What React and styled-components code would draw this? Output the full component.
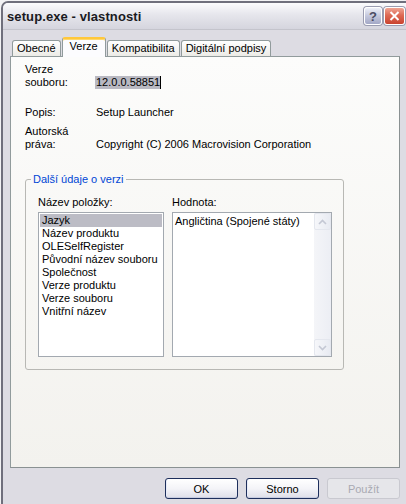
import React from 'react';
import styled, { createGlobalStyle, css } from 'styled-components';

const Global = createGlobalStyle`
  html, body { margin: 0; padding: 0; background: #f2f2f4; }
  body {
    font-family: "Liberation Sans", Arial, sans-serif;
    font-size: 11px;
    color: #000;
    overflow: hidden;
  }
  * { box-sizing: border-box; }
`;

const Window = styled.div`
  margin: 1px 0 0 1px;
  height: 503px;
  border-top: 2px solid #6f6f7c;
  border-left: 2px solid #6f6f7c;
  border-top-left-radius: 7px;
  background: #dddce3;
  display: flex;
  flex-direction: column;
  overflow: hidden;
`;

const TitleBar = styled.div`
  height: 27px;
  flex: none;
  display: flex;
  align-items: center;
  padding: 0 1px 0 4px;
  background: linear-gradient(#fbfbfd 0%, #e6e6ec 45%, #d5d5de 100%);
  border-bottom: 1px solid #c4c4cc;
`;

const Title = styled.div`
  font-family: "Liberation Sans", Arial, sans-serif;
  font-weight: bold;
  font-size: 13px;
  color: #1a1a22;
  letter-spacing: 0.1px;
`;

const TitleButtons = styled.div`
  margin-left: auto;
  display: flex;
  gap: 2px;
  align-self: flex-start;
  margin-top: 4px;
`;

const CaptionButton = styled.div`
  height: 18px;
  border: 1px solid #fff;
  border-radius: 3px;
  display: flex;
  align-items: center;
  justify-content: center;
  box-shadow: 0 0 0 1px #9a9cb0;
  ${(p) =>
    p.$kind === 'close'
      ? css`
          width: 21px;
          background: linear-gradient(#f0a594 0%, #de6a55 45%, #c9432f 100%);
        `
      : css`
          width: 18px;
          background: linear-gradient(#eef0f8 0%, #c3c7dc 50%, #a3a8c6 100%);
          color: #4a4c62;
          font-weight: bold;
          font-size: 13px;
        `}
`;

const Body = styled.div`
  flex: 1;
  padding: 7px 6px 0 7px;
  display: flex;
  flex-direction: column;
`;

const TabStrip = styled.div`
  height: 19px;
  display: flex;
  align-items: flex-end;
  padding-left: 2px;
`;

const Tab = styled.div`
  height: 16px;
  padding: 0 4px;
  margin-right: 1px;
  border: 1px solid #919b9c;
  border-bottom: none;
  border-radius: 3px 3px 0 0;
  background: linear-gradient(#ffffff, #ecebe6);
  display: flex;
  align-items: center;
  line-height: 13px;
  white-space: nowrap;
  ${(p) =>
    p.$active &&
    css`
      height: 20px;
      margin-bottom: -1px;
      padding: 0 7px 3px;
      border-top: 2px solid #ffc83c;
      box-shadow: inset 0 1px 0 #ffd86c;
      background: #fcfcfe;
      position: relative;
      z-index: 2;
    `}
`;

const Panel = styled.div`
  height: 412px;
  flex: none;
  position: relative;
  z-index: 1;
  border: 1px solid #919b9c;
  border-right-color: #8a9192;
  border-bottom-color: #8a9192;
  background: linear-gradient(#fcfcfb, #f3f2ee);
  padding: 6px 0 0 14px;
`;

const InfoRow = styled.div`
  display: grid;
  grid-template-columns: 71px auto;
  align-items: end;
  line-height: 13px;
  margin-top: ${(p) => p.$gap || 0}px;
`;

const Selected = styled.span`
  display: inline-block;
  background: #b9b9c2;
  padding: 0 0 0 1px;
  margin-left: -1px;
  border-right: 1px solid #000;
`;

const Group = styled.fieldset`
  margin: 22px 0 0 0;
  width: 319px;
  min-width: 0;
  padding: 10px 11px 12px 12px;
  border: 1px solid #b8b8b4;
  border-radius: 3px;
`;

const Legend = styled.legend`
  color: #0046d5;
  line-height: 13px;
  padding: 0 2px;
  margin-left: -7px;
`;

const Columns = styled.div`
  display: grid;
  grid-template-columns: 126px 160px;
  column-gap: 8px;
`;

const ColLabel = styled.div`
  line-height: 13px;
  margin-bottom: 3px;
`;

const ListBox = styled.div`
  height: 145px;
  border: 1px solid #a3a9b0;
  background: #fff;
  padding: 1px;
`;

const Item = styled.div`
  line-height: 13px;
  padding-left: 2px;
  background: ${(p) => (p.$selected ? '#bcbcc5' : 'transparent')};
`;

const ValueBox = styled.div`
  height: 145px;
  border: 1px solid #a3a9b0;
  background: #fff;
  display: flex;
`;

const ValueText = styled.div`
  flex: 1;
  padding: 2px 2px;
  line-height: 13px;
`;

const ScrollBar = styled.div`
  width: 17px;
  display: flex;
  flex-direction: column;
  justify-content: space-between;
  background: linear-gradient(to right, #f4f5f8, #eceef4);
`;

const ScrollButton = styled.div`
  width: 17px;
  height: 17px;
  border: 1px solid #e4e7ee;
  border-radius: 2px;
  background: linear-gradient(to right, #f6f7fa, #e8ebf2);
  display: flex;
  align-items: center;
  justify-content: center;
`;

const ButtonRow = styled.div`
  display: flex;
  justify-content: flex-end;
  gap: 8px;
  margin-top: 10px;
`;

const Button = styled.div`
  width: 73px;
  height: 21px;
  border-radius: 3px;
  display: flex;
  align-items: center;
  justify-content: center;
  ${(p) =>
    p.$disabled
      ? css`
          border: 1px solid #c9c9d0;
          background: #e6e6ea;
          color: #a9a9b2;
        `
      : css`
          border: 1px solid #1e2f5c;
          background: linear-gradient(#ffffff 0%, #f4f4f8 50%, #dedee8 100%);
          box-shadow: inset 0 -1px 0 #c8cde0, inset 1px 0 0 #e8ecf8;
          color: #000;
        `}
`;

const Chevron = ({ up }) => (
  <svg width="9" height="6" viewBox="0 0 9 6">
    <path
      d={up ? 'M1 5 L4.5 1.5 L8 5' : 'M1 1 L4.5 4.5 L8 1'}
      fill="none"
      stroke="#c4c8d4"
      strokeWidth="1.6"
    />
  </svg>
);

const items = [
  'Jazyk',
  'Název produktu',
  'OLESelfRegister',
  'Původní název souboru',
  'Společnost',
  'Verze produktu',
  'Verze souboru',
  'Vnitřní název',
];

const tabs = ['Obecné', 'Verze', 'Kompatibilita', 'Digitální podpisy'];

export default function App() {
  return (
    <>
      <Global />
      <Window>
        <TitleBar>
          <Title>setup.exe - vlastnosti</Title>
          <TitleButtons>
            <CaptionButton $kind="help">?</CaptionButton>
            <CaptionButton $kind="close">
              <svg width="11" height="10" viewBox="0 0 11 10">
                <path d="M1.5 1 L9.5 9 M9.5 1 L1.5 9" stroke="#fff" strokeWidth="2" />
              </svg>
            </CaptionButton>
          </TitleButtons>
        </TitleBar>
        <Body>
          <TabStrip>
            {tabs.map((t) => (
              <Tab key={t} $active={t === 'Verze'}>
                {t}
              </Tab>
            ))}
          </TabStrip>
          <Panel>
            <InfoRow>
              <div>
                Verze
                <br />
                souboru:
              </div>
              <div>
                <Selected>12.0.0.58851</Selected>
              </div>
            </InfoRow>
            <InfoRow $gap={17}>
              <div>Popis:</div>
              <div>Setup Launcher</div>
            </InfoRow>
            <InfoRow $gap={6}>
              <div>
                Autorská
                <br />
                práva:
              </div>
              <div>Copyright (C) 2006 Macrovision Corporation</div>
            </InfoRow>
            <Group>
              <Legend>Další údaje o verzi</Legend>
              <Columns>
                <div>
                  <ColLabel>Název položky:</ColLabel>
                  <ListBox>
                    {items.map((it, i) => (
                      <Item key={it} $selected={i === 0}>
                        {it}
                      </Item>
                    ))}
                  </ListBox>
                </div>
                <div>
                  <ColLabel>Hodnota:</ColLabel>
                  <ValueBox>
                    <ValueText>Angličtina (Spojené státy)</ValueText>
                    <ScrollBar>
                      <ScrollButton>
                        <Chevron up />
                      </ScrollButton>
                      <ScrollButton>
                        <Chevron />
                      </ScrollButton>
                    </ScrollBar>
                  </ValueBox>
                </div>
              </Columns>
            </Group>
          </Panel>
          <ButtonRow>
            <Button>OK</Button>
            <Button>Storno</Button>
            <Button $disabled>Použít</Button>
          </ButtonRow>
        </Body>
      </Window>
    </>
  );
}
